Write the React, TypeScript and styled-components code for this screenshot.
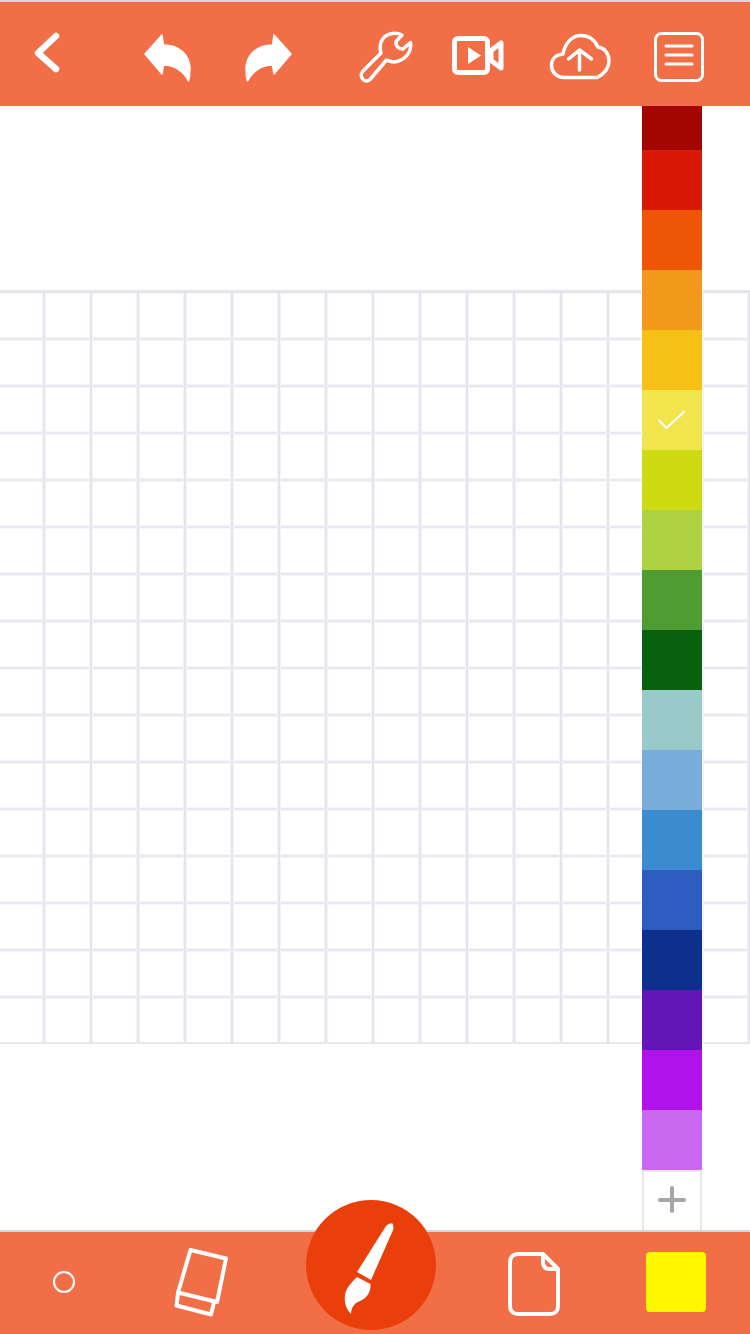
import styled, { createGlobalStyle } from "styled-components";

const GlobalStyle = createGlobalStyle`
  html, body {
    margin: 0;
    padding: 0;
    background: #fff;
    font-family: "Liberation Sans", Arial, sans-serif;
  }
`;

/**
 * Styles
 */
const Page = styled.div`
  width: 750px;
  height: 1334px;
  display: flex;
  flex-direction: column;
  overflow: hidden;
  position: relative;
`;
const TopBar = styled.header`
  flex: none;
  height: 104px;
  border-top: 2px solid #d6d6d6;
  background: #f26e46;
  display: grid;
  grid-template-columns: 100px 118px 122px 92px 98px 102px 118px;
  position: relative;
  z-index: 2;
`;
const BottomBar = styled.footer`
  flex: none;
  height: 102px;
  border-top: 2px solid #cfd6dc;
  background: #f26e46;
  display: grid;
  grid-template-columns: 128px 148px 190px 134px 150px;
  position: relative;
  z-index: 2;
`;
const Icon = styled.svg`
  display: block;
  width: 100%;
  height: 100%;
  fill: none;
  stroke: #fff;
  stroke-linecap: round;
  stroke-linejoin: round;
`;
const Main = styled.main`
  flex: 1;
  position: relative;
  padding-top: 184px;
`;
const Board = styled.div`
  box-sizing: border-box;
  width: 752px;
  height: 754px;
  margin-left: -2px;
  border-top: 3px solid #e6e6ea;
  border-bottom: 2px solid #e8e8e8;
  background-image: linear-gradient(
      to right,
      #f3f4f8 1px,
      transparent 1px,
      transparent 44px,
      #f3f4f8 44px,
      #f3f4f8 45px,
      #e3e5ef 45px
    ),
    linear-gradient(
      to bottom,
      #f6f6f9 1px,
      transparent 1px,
      transparent 44px,
      #f6f6f9 44px,
      #f6f6f9 45px,
      #e8e9f0 45px
    );
  background-size: 47px 47px;
`;
const Palette = styled.div`
  position: absolute;
  top: -16px;
  left: 642px;
  width: 60px;
  display: flex;
  flex-direction: column;
  box-shadow: 0 0 0 1px rgba(255, 255, 255, 0.6);
`;
const Swatch = styled.div<{ $color: string }>`
  height: 60px;
  background: ${(p) => p.$color};
  display: flex;
  align-items: center;
  justify-content: center;
`;
const AddColor = styled.div`
  box-sizing: border-box;
  height: 60px;
  background: #fff;
  border: 2px solid #e8e8e8;
  border-bottom: none;
`;
const BrushButton = styled.div`
  position: absolute;
  left: 306px;
  top: -32px;
  width: 130px;
  height: 130px;
  border-radius: 50%;
  background: #ea3f0a;
`;
const CurrentColor = styled.div`
  width: 60px;
  height: 60px;
  margin: 20px 0 0 46px;
  border-radius: 4px;
  background: #fff700;
`;

const colors = [
  "#a30500",
  "#d91806",
  "#ee5506",
  "#f2991b",
  "#f6c016",
  "#f1e44c",
  "#cedb12",
  "#aed241",
  "#509c32",
  "#09600e",
  "#99c9c8",
  "#77add8",
  "#3a8bd0",
  "#2f5dbf",
  "#0e308d",
  "#6216b5",
  "#b012ec",
  "#c969f0",
];
const selected = "#f1e44c";

export default function App() {
  return (
    <Page>
      <GlobalStyle />
      <TopBar>
        <Icon viewBox="0 2 100 104">
          <path d="M56 36 L38 53 L56 69" strokeWidth="6.5" />
        </Icon>
        <Icon viewBox="100 2 118 104">
          <path
            d="M162 35 L145 54 L162 74 L163.5 65 C175 65 184 72 188.5 81 C190 76 190 72 190 69 C190 56 180 45 163.5 45 Z"
            fill="#fff"
            strokeWidth="1.5"
          />
        </Icon>
        <Icon viewBox="218 2 122 104">
          <path
            d="M274 35 L291 54 L274 74 L272.5 65 C261 65 252 72 247.5 81 C246 76 246 72 246 69 C246 56 256 45 272.5 45 Z"
            fill="#fff"
            strokeWidth="1.5"
          />
        </Icon>
        <Icon viewBox="340 2 92 104">
          <path
            d="M363 71 L381 53 C378 43 383 35 392 33.5 C396 33 399 33.5 402 35 L396 41.5 C395.5 46 399 49.5 403 49 L410.5 42.5 C412 52 405 61 394 62 C391 62 389 61 386.5 60 L370 79.5 C365 84 358 77 363 71 Z"
            strokeWidth="3.5"
          />
        </Icon>
        <Icon viewBox="432 2 98 104">
          <rect x="454.5" y="38.5" width="33" height="34" rx="3.5" strokeWidth="5" />
          <path d="M491 50.5 L501 43 V68 L491 60.5 Z" strokeWidth="5" />
          <path d="M468 47 L481 55.5 L468 64 Z" fill="#fff" stroke="none" />
        </Icon>
        <Icon viewBox="530 2 102 104">
          <path
            d="M564 77.5 C557 77.5 551.5 72 551.5 65.5 C551.5 59 556 54.5 563 54 C565 43 572 35.5 581 35.5 C589 35.5 595 40.5 598 47 C605 48 609 54 609 61 C609 68 604 74 597 77.5 Z"
            strokeWidth="3.5"
          />
          <path d="M579.5 70 V50.5 M568.5 59 L579.5 50 L591.5 59" strokeWidth="3.5" />
        </Icon>
        <Icon viewBox="632 2 118 104">
          <rect x="655.5" y="33.5" width="47" height="47" rx="6" strokeWidth="3" />
          <path d="M666 46 H692 M666 55 H692 M666 64 H692" strokeWidth="3" />
        </Icon>
      </TopBar>
      <Main>
        <Board />
        <Palette>
          {colors.map((c) => (
            <Swatch key={c} $color={c}>
              {c === selected && (
                <svg width="30" height="20" viewBox="0 0 30 20">
                  <path d="M1.5 10 L9.5 18 L28 1" fill="none" stroke="#fff" strokeWidth="2" />
                </svg>
              )}
            </Swatch>
          ))}
          <AddColor>
            <Icon viewBox="2 2 56 58">
              <path d="M30 18 V41 M18 30 H42" stroke="#a6a6a6" strokeWidth="4" />
            </Icon>
          </AddColor>
        </Palette>
      </Main>
      <BottomBar>
        <Icon viewBox="0 1232 128 102">
          <circle cx="64" cy="1282" r="10" strokeWidth="2" />
        </Icon>
        <Icon viewBox="128 1232 148 102">
          <path
            d="M190.5 1250 L226 1258.5 L217 1302 L178 1292.5 Z M178 1293.5 L176.5 1305.5 L211 1314.5 L214 1302"
            strokeWidth="4"
          />
        </Icon>
        <div />
        <Icon viewBox="466 1232 134 102">
          <path
            d="M543 1254 H518 C513 1254 510 1257 510 1262 V1306 C510 1311 513 1314 518 1314 H550 C555 1314 558 1311 558 1306 V1269 Z M543 1254 V1262 C543 1266 545 1269 550 1269 H558"
            strokeWidth="4"
          />
        </Icon>
        <CurrentColor />
        <BrushButton>
          <Icon viewBox="306 1200 130 130">
            <path
              d="M386 1226 Q390 1222 393 1224 L393.5 1229 L371 1280 L357 1272 Z"
              fill="#fff"
              stroke="none"
            />
            <path
              d="M357 1277 L370.5 1284 C371 1292 367 1298 360 1301 C354 1303 351 1308 351 1314 C346 1309 344 1302 345 1295 C346 1288 351 1283 357 1277 Z"
              fill="#fff"
              stroke="none"
            />
          </Icon>
        </BrushButton>
      </BottomBar>
    </Page>
  );
}
